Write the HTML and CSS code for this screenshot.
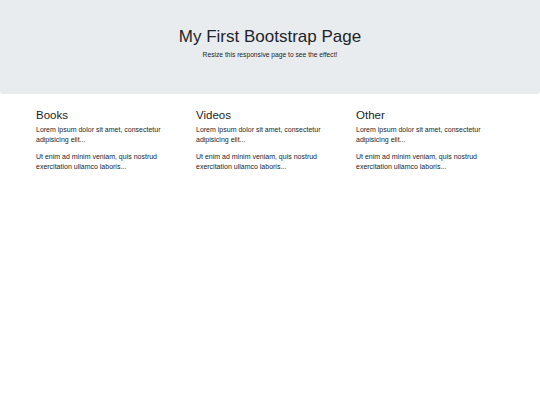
FILE: index.html
```html
<!DOCTYPE html>
<html>
<head>
<meta charset="utf-8">
<link rel="stylesheet" href="styles.css">
</head>
<body>
<div class="jumbotron">
  <h1 class="title">My First Bootstrap Page</h1>
  <p class="lead">Resize this responsive page to see the effect!</p>
</div>
<div class="container">
  <div class="col">
    <h3 class="head">Books</h3>
    <p class="text">Lorem ipsum dolor sit amet, consectetur adipisicing elit...</p>
    <p class="text">Ut enim ad minim veniam, quis nostrud exercitation ullamco laboris...</p>
  </div>
  <div class="col">
    <h3 class="head">Videos</h3>
    <p class="text">Lorem ipsum dolor sit amet, consectetur adipisicing elit...</p>
    <p class="text">Ut enim ad minim veniam, quis nostrud exercitation ullamco laboris...</p>
  </div>
  <div class="col">
    <h3 class="head">Other</h3>
    <p class="text">Lorem ipsum dolor sit amet, consectetur adipisicing elit...</p>
    <p class="text">Ut enim ad minim veniam, quis nostrud exercitation ullamco laboris...</p>
  </div>
</div>
</body>
</html>
```
FILE: styles.css
```css
html, body {
  margin: 0;
  padding: 0;
  background: #fff;
  font-family: "Liberation Sans", Arial, sans-serif;
  color: #212529;
}
.jumbotron {
  background: #e9ecef;
  height: 94px;
  box-sizing: border-box;
  padding-top: 26px;
  text-align: center;
  border-radius: 0 0 3px 3px;
}
.title {
  margin: 0;
  font-size: 17px;
  font-weight: normal;
  line-height: 22px;
}
.lead {
  margin: 2px 0 0;
  font-size: 6.7px;
  line-height: 9px;
}
.container {
  width: 480px;
  margin: 0 auto;
  padding-top: 14px;
  display: grid;
  grid-template-columns: repeat(3, 1fr);
}
.col {
  padding: 0 6px;
}
.head {
  margin: 0 0 3px;
  font-size: 11.5px;
  font-weight: normal;
  line-height: 14px;
}
.text {
  margin: 0 0 7px;
  font-size: 7px;
  line-height: 10px;
  padding-right: 10px;
}
.text + .text {
  margin-top: 0;
}
.col .head + .text {
  margin-top: 1px;
}
```
